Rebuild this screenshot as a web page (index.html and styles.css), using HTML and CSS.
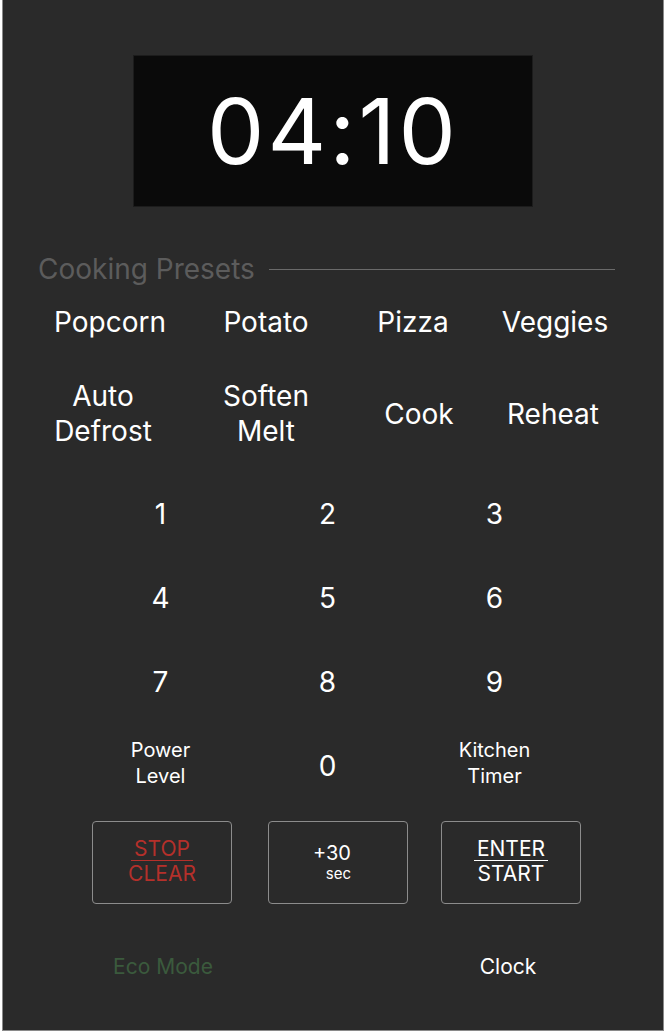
FILE: index.html
```html
<!DOCTYPE html>
<html>
<head>
<meta charset="utf-8">
<link rel="stylesheet" href="styles.css">
</head>
<body>
<div class="panel">
  <div class="display"><span class="time">04:10</span></div>

  <div class="section-head">
    <span class="section-title">Cooking Presets</span>
    <span class="section-rule"></span>
  </div>

  <div class="presets row-one">
    <div class="preset">Popcorn</div>
    <div class="preset">Potato</div>
    <div class="preset">Pizza</div>
    <div class="preset">Veggies</div>
  </div>
  <div class="presets row-two">
    <div class="preset">Auto<br>Defrost</div>
    <div class="preset">Soften<br>Melt</div>
    <div class="preset">Cook</div>
    <div class="preset">Reheat</div>
  </div>

  <div class="keypad">
    <div class="key">1</div>
    <div class="key">2</div>
    <div class="key">3</div>
    <div class="key">4</div>
    <div class="key">5</div>
    <div class="key">6</div>
    <div class="key">7</div>
    <div class="key">8</div>
    <div class="key">9</div>
    <div class="key label">Power<br>Level</div>
    <div class="key">0</div>
    <div class="key label">Kitchen<br>Timer</div>
  </div>

  <div class="actions">
    <div class="action stop">
      <span class="top-word">STOP</span>
      <span class="bottom-word">CLEAR</span>
    </div>
    <div class="action add">
      <span class="add-text"><span class="add-num">+30</span><span class="add-unit">sec</span></span>
    </div>
    <div class="action enter">
      <span class="top-word">ENTER</span>
      <span class="bottom-word">START</span>
    </div>
  </div>

  <div class="footer">
    <span class="eco">Eco Mode</span>
    <span class="clock">Clock</span>
  </div>
</div>
</body>
</html>
```

FILE: styles.css
```css
html, body {
  margin: 0;
  padding: 0;
  background: #ffffff;
}

body {
  font-family: Inter, "Noto Sans", sans-serif;
  color: #ffffff;
}

.panel {
  box-sizing: border-box;
  width: 662px;
  height: 1032px;
  margin: -1px 0 0 2px;
  background: #2a2a2a;
  border: 1px solid #8a8a8a;
  display: flex;
  flex-direction: column;
}

.display {
  box-sizing: border-box;
  width: 400px;
  height: 152px;
  margin: 55px auto 0;
  background: #0a0a0a;
  border: 1px solid #1c1c1c;
  display: flex;
  align-items: center;
  justify-content: center;
}

.time {
  font-family: Inter, sans-serif;
  font-size: 91px;
  font-weight: 400;
  line-height: 1;
  letter-spacing: 3px;
  color: #ffffff;
}

.section-head {
  display: flex;
  align-items: center;
  height: 30px;
  margin-top: 47px;
  padding: 0 48px 0 35px;
  gap: 14px;
}

.section-title {
  font-size: 28px;
  line-height: 30px;
  color: #5c5c5c;
  white-space: nowrap;
}

.section-rule {
  flex: 1;
  height: 1px;
  background: #6a6a6a;
}

.presets {
  display: grid;
  margin-left: 27px;
}

.row-one {
  grid-template-columns: 160px 152px 142px 142px;
  height: 34px;
  margin-top: 21px;
}

.row-two {
  grid-template-columns: 146px 180px 126px 142px;
  height: 70px;
  margin-top: 40px;
}

.preset {
  display: flex;
  align-items: center;
  justify-content: center;
  text-align: center;
  font-size: 28px;
  line-height: 35px;
  color: #ffffff;
}

.keypad {
  display: grid;
  grid-template-columns: repeat(3, 167px);
  grid-auto-rows: 84px;
  margin: 23px 0 0 74px;
}

.key {
  display: flex;
  align-items: center;
  justify-content: center;
  font-size: 28px;
  color: #ffffff;
}

.key.label {
  font-size: 20px;
  line-height: 26px;
  text-align: center;
  padding-bottom: 6px;
}

.actions {
  display: flex;
  margin: 13px 0 0 89px;
}

.action {
  box-sizing: border-box;
  width: 140px;
  height: 83px;
  border: 1px solid #8c8c8c;
  border-radius: 4px;
  display: flex;
  flex-direction: column;
  align-items: center;
  justify-content: center;
  font-size: 21px;
  line-height: 25px;
}

.action.add {
  margin-left: 36px;
}

.action.enter {
  margin-left: 33px;
}

.stop {
  color: #b5302a;
}

.top-word {
  padding: 0 3px;
  border-bottom: 1px solid currentColor;
  line-height: 22px;
}

.bottom-word {
  line-height: 26px;
}

.add-text {
  display: inline-flex;
  flex-direction: column;
  align-items: flex-end;
  margin-right: 12px;
}

.add-num {
  font-size: 20px;
  line-height: 22px;
}

.add-unit {
  font-size: 15px;
  line-height: 20px;
}

.footer {
  display: flex;
  margin: 51px 0 0 0;
  font-size: 21px;
  line-height: 24px;
}

.eco {
  flex: none;
  width: 320px;
  text-align: center;
  color: #3b5a3d;
}

.clock {
  flex: none;
  box-sizing: border-box;
  width: 340px;
  padding-left: 30px;
  text-align: center;
  color: #ffffff;
}
```
